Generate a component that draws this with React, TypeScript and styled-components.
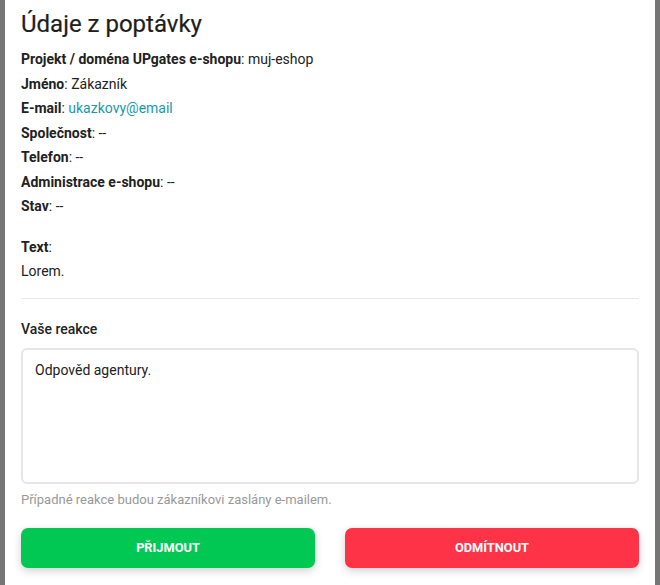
import React from "react";
import styled, { createGlobalStyle } from "styled-components";

const Global = createGlobalStyle`
  html, body { margin: 0; padding: 0; background: #767676; }
  body { font-family: Roboto, "Noto Sans", Arial, sans-serif; color: #222; }
  * { box-sizing: border-box; }
`;

const Page = styled.div`
  display: flex;
  height: 585px;
  padding-left: 5px;
`;

const Modal = styled.div`
  width: 650px;
  background: #fff;
  padding: 9px 16px 0 16px;
  display: flex;
  flex-direction: column;
`;

const Title = styled.h2`
  margin: 0 0 8px;
  font-size: 24px;
  font-weight: 400;
  line-height: 30px;
  color: #1e1e1e;
  -webkit-text-stroke: 0.2px #1e1e1e;
`;

const Row = styled.p`
  margin: 0;
  font-size: 14px;
  line-height: 24.5px;
  color: #222;
`;

const Label = styled.b`
  font-weight: 700;
`;

const Link = styled.a`
  color: #1799ad;
  text-decoration: none;
`;

const TextBlock = styled.div`
  margin-top: 16px;
`;

const Divider = styled.hr`
  border: none;
  border-top: 1px solid #e8e8e8;
  margin: 14px 0 18px;
`;

const SectionLabel = styled.div`
  font-size: 14px;
  font-weight: 500;
  line-height: 24px;
  margin-bottom: 7px;
`;

const Area = styled.div`
  height: 136px;
  border: 2px solid #e6e6e6;
  border-radius: 6px;
  padding: 10px 12px;
  font-size: 14px;
  line-height: 20px;
  color: #222;
`;

const Hint = styled.div`
  font-size: 13px;
  color: #999;
  line-height: 16px;
  margin-top: 8px;
`;

const Buttons = styled.div`
  display: grid;
  grid-template-columns: 1fr 1fr;
  column-gap: 30px;
  margin-top: 20px;
`;

const Button = styled.button<{ $tone: "ok" | "no" }>`
  height: 40px;
  border: none;
  border-radius: 7px;
  background: ${(p) => (p.$tone === "ok" ? "#00c853" : "#ff3347")};
  color: #fff;
  font-family: Roboto, "Noto Sans", Arial, sans-serif;
  font-size: 12.8px;
  font-weight: 700;
  text-transform: uppercase;
  box-shadow: 0 3px 8px rgba(0, 0, 0, 0.18);
  cursor: pointer;
`;

export default function App() {
  return (
    <>
      <Global />
      <Page>
        <Modal>
          <Title>Údaje z poptávky</Title>
          <Row><Label>Projekt / doména UPgates e-shopu</Label>: muj-eshop</Row>
          <Row><Label>Jméno</Label>: Zákazník</Row>
          <Row><Label>E-mail</Label>: <Link href="#">ukazkovy@email</Link></Row>
          <Row><Label>Společnost</Label>: --</Row>
          <Row><Label>Telefon</Label>: --</Row>
          <Row><Label>Administrace e-shopu</Label>: --</Row>
          <Row><Label>Stav</Label>: --</Row>
          <TextBlock>
            <Row><Label>Text</Label>:</Row>
            <Row>Lorem.</Row>
          </TextBlock>
          <Divider />
          <SectionLabel>Vaše reakce</SectionLabel>
          <Area>Odpověd agentury.</Area>
          <Hint>Případné reakce budou zákazníkovi zaslány e-mailem.</Hint>
          <Buttons>
            <Button $tone="ok">Přijmout</Button>
            <Button $tone="no">Odmítnout</Button>
          </Buttons>
        </Modal>
      </Page>
    </>
  );
}
